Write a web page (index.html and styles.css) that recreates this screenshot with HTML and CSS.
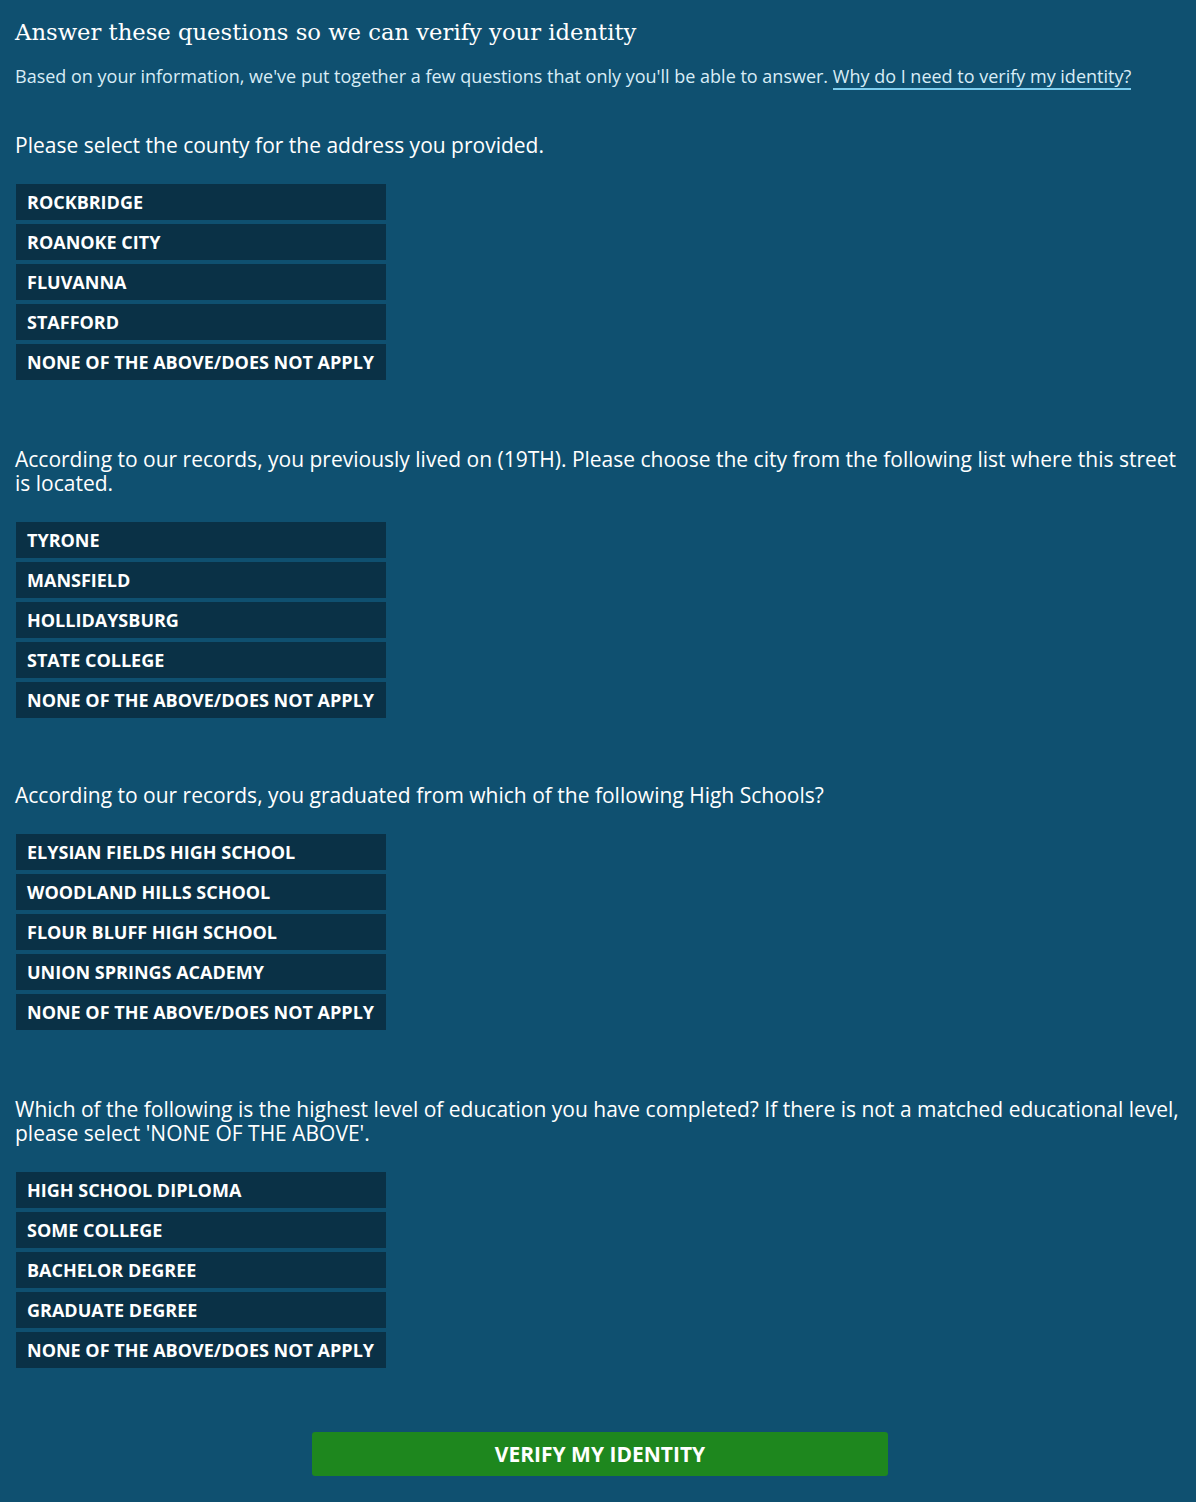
FILE: index.html
```html
<!DOCTYPE html>
<html lang="en">
<head>
<meta charset="utf-8">
<title>Verify your identity</title>
<link rel="stylesheet" href="styles.css">
</head>
<body>
<main class="page">
  <h1 class="title">Answer these questions so we can verify your identity</h1>
  <p class="intro">Based on your information, we've put together a few questions that only you'll be able to answer. <a href="#" class="intro-link">Why do I need to verify my identity?</a></p>

  <section class="question">
    <p class="question-text">Please select the county for the address you provided.</p>
    <ul class="options">
      <li class="option">ROCKBRIDGE</li>
      <li class="option">ROANOKE CITY</li>
      <li class="option">FLUVANNA</li>
      <li class="option">STAFFORD</li>
      <li class="option">NONE OF THE ABOVE/DOES NOT APPLY</li>
    </ul>
  </section>

  <section class="question">
    <p class="question-text">According to our records, you previously lived on (19TH). Please choose the city from the following list where this street is located.</p>
    <ul class="options">
      <li class="option">TYRONE</li>
      <li class="option">MANSFIELD</li>
      <li class="option">HOLLIDAYSBURG</li>
      <li class="option">STATE COLLEGE</li>
      <li class="option">NONE OF THE ABOVE/DOES NOT APPLY</li>
    </ul>
  </section>

  <section class="question question-short">
    <p class="question-text">According to our records, you graduated from which of the following High Schools?</p>
    <ul class="options">
      <li class="option">ELYSIAN FIELDS HIGH SCHOOL</li>
      <li class="option">WOODLAND HILLS SCHOOL</li>
      <li class="option">FLOUR BLUFF HIGH SCHOOL</li>
      <li class="option">UNION SPRINGS ACADEMY</li>
      <li class="option">NONE OF THE ABOVE/DOES NOT APPLY</li>
    </ul>
  </section>

  <section class="question">
    <p class="question-text">Which of the following is the highest level of education you have completed? If there is not a matched educational level, please select 'NONE OF THE ABOVE'.</p>
    <ul class="options">
      <li class="option">HIGH SCHOOL DIPLOMA</li>
      <li class="option">SOME COLLEGE</li>
      <li class="option">BACHELOR DEGREE</li>
      <li class="option">GRADUATE DEGREE</li>
      <li class="option">NONE OF THE ABOVE/DOES NOT APPLY</li>
    </ul>
  </section>

  <div class="actions">
    <button class="verify-btn" type="button">VERIFY MY IDENTITY</button>
  </div>
</main>
</body>
</html>
```

FILE: styles.css
```css
html, body {
  margin: 0;
  padding: 0;
}
body {
  background: #0f5070;
  color: #ffffff;
  font-family: "Open Sans", "Noto Sans", sans-serif;
}
.page {
  padding: 16px 16px 26px 15px;
}
.title {
  margin: 0;
  font-family: "DejaVu Serif", "Liberation Serif", serif;
  font-weight: normal;
  font-size: 22.7px;
  line-height: 32px;
  color: #ffffff;
}
.intro {
  margin: 16px 0 0 0;
  font-size: 18px;
  line-height: 24px;
  color: #d8ecf6;
}
.intro-link {
  color: #d8ecf6;
  text-decoration: none;
  border-bottom: 2px solid #7ccdee;
}
.question {
  margin-top: 45px;
}
.question + .question {
  margin-top: 67px;
}
.question + .question-short {
  margin-top: 65px;
}
.question-text {
  margin: 0;
  font-size: 21px;
  line-height: 24px;
  color: #ffffff;
}
.options {
  list-style: none;
  margin: 27px 0 0 1px;
  padding: 0;
  display: flex;
  flex-direction: column;
  gap: 4px;
}
.option {
  width: 359px;
  height: 36px;
  padding-left: 11px;
  display: flex;
  align-items: center;
  background: #0a3146;
  font-size: 18px;
  font-weight: 700;
  color: #ffffff;
}
.actions {
  display: flex;
  justify-content: center;
  margin-top: 64px;
}
.verify-btn {
  width: 576px;
  height: 44px;
  border: none;
  border-radius: 3px;
  background: #1e871e;
  color: #ffffff;
  font-family: "Open Sans", "Noto Sans", sans-serif;
  font-size: 21px;
  font-weight: 700;
  margin-left: 5px;
}
```
